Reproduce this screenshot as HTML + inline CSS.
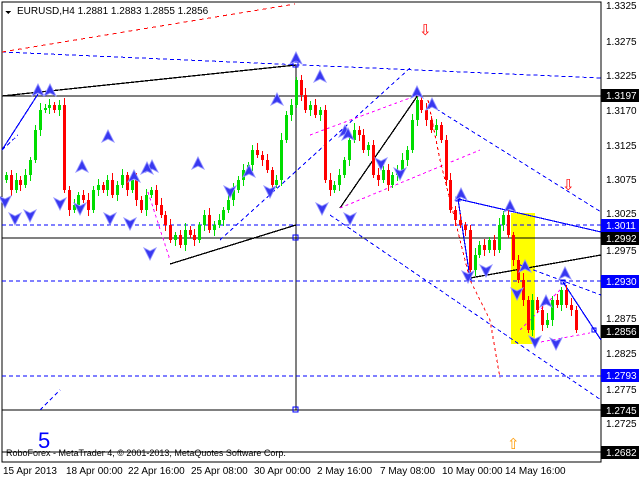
<!DOCTYPE html>
<html><head><meta charset="utf-8"><style>
body{margin:0;background:#fff;width:640px;height:480px;overflow:hidden;font-family:"Liberation Sans",sans-serif}
svg text{font-family:"Liberation Sans",sans-serif;font-size:10px}
</style></head><body>
<svg id="s" width="640" height="480" xmlns="http://www.w3.org/2000/svg" shape-rendering="crispEdges">
<rect width="640" height="480" fill="#fff"/>
<rect x="2" y="2" width="599" height="460" fill="none" stroke="#000"/>
<rect x="511" y="213" width="24" height="131" fill="#ffff00"/>
<g stroke="#000" stroke-width="1.3">
<line x1="2" y1="96" x2="601" y2="96"/>
<line x1="2" y1="238" x2="601" y2="238"/>
<line x1="2" y1="410" x2="601" y2="410"/>
<line x1="2" y1="452" x2="601" y2="452"/>
<line x1="2" y1="96" x2="296" y2="65"/>
<line x1="170" y1="264" x2="296" y2="225"/>
<line x1="340" y1="208" x2="418" y2="95"/>
<line x1="470" y1="278" x2="601" y2="255"/>
</g>
<line x1="296" y1="65" x2="296" y2="410" stroke="#000"/>
<g stroke="#0000ff" stroke-dasharray="4,3">
<line x1="2" y1="225" x2="601" y2="225"/>
<line x1="2" y1="281" x2="601" y2="281"/>
<line x1="2" y1="376" x2="601" y2="376"/>
<line x1="2" y1="52" x2="601" y2="78"/>
<line x1="2" y1="150" x2="18" y2="135"/>
<line x1="220" y1="240" x2="410" y2="68"/>
<line x1="430" y1="105" x2="601" y2="212"/>
<line x1="330" y1="215" x2="601" y2="400"/>
<line x1="520" y1="265" x2="601" y2="295"/>
<line x1="40" y1="410" x2="60" y2="390"/>
</g>
<line x1="2" y1="52" x2="295" y2="4" stroke="#ff0000" stroke-dasharray="4,4"/>
<g stroke="#0000ff" stroke-width="1.2" fill="none">
<line x1="2" y1="150" x2="38" y2="94"/>
<line x1="458" y1="199" x2="601" y2="232"/>
<line x1="458" y1="199" x2="470" y2="278"/>
<line x1="563" y1="282" x2="601" y2="340"/>
<rect x="293" y="62" width="5" height="5"/><rect x="293" y="235" width="5" height="5"/><rect x="293" y="407" width="5" height="5"/>
<rect x="456" y="197" width="4" height="4"/><rect x="467" y="276" width="4" height="4"/><rect x="561" y="280" width="4" height="4"/><rect x="592" y="328" width="4" height="4"/>
</g>
<g stroke="#ff00ff" stroke-dasharray="3,3" fill="none">
<polyline points="148,192 170,260"/>
<polyline points="310,135 418,95"/>
<polyline points="340,208 480,150"/>
<polyline points="535,343 590,333"/>
<polyline points="520,330 560,290"/>
</g>
<polyline points="428,100 440,160 470,280 490,320 500,378" fill="none" stroke="#ff0000" stroke-dasharray="3,3"/>
<g id="c"></g>
<g id="m" fill="#3838f0" stroke="#9090ff" stroke-width="0.8"></g>
<text x="419" y="35" fill="#ff0000" style="font-size:15px">⇩</text>
<text x="562" y="190" fill="#ff0000" style="font-size:15px">⇩</text>
<text x="507" y="449" fill="#ff9900" style="font-size:15px">⇧</text>
<text x="38" y="448" fill="#0000ff" style="font-size:22px">5</text>
<text x="6" y="456" fill="#000" style="font-size:9px">RoboForex - MetaTrader 4, © 2001-2013, MetaQuotes Software Corp.</text>
<path d="M5 11 L11 11 L8 14Z" fill="#000"/>
<text x="17" y="14" fill="#000">EURUSD,H4  1.2881 1.2883 1.2855 1.2856</text>
<g fill="#000">
<text x="606" y="9">1.3325</text><text x="606" y="45">1.3275</text><text x="606" y="79">1.3225</text>
<text x="606" y="114">1.3170</text><text x="606" y="149">1.3125</text><text x="606" y="183">1.3075</text>
<text x="606" y="217">1.3025</text><text x="606" y="254">1.2975</text><text x="606" y="322">1.2875</text>
<text x="606" y="357">1.2825</text><text x="606" y="393">1.2775</text><text x="606" y="427">1.2725</text>
</g>
<rect x="601" y="89" width="38" height="13" fill="#000"/><text x="606" y="99" fill="#fff">1.3197</text>
<rect x="601" y="219" width="38" height="13" fill="#0000ff"/><text x="606" y="229" fill="#fff">1.3011</text>
<rect x="601" y="232" width="38" height="13" fill="#000"/><text x="606" y="242" fill="#fff">1.2992</text>
<rect x="601" y="275" width="38" height="13" fill="#0000ff"/><text x="606" y="285" fill="#fff">1.2930</text>
<rect x="601" y="325" width="38" height="13" fill="#000"/><text x="606" y="335" fill="#fff">1.2856</text>
<rect x="601" y="369" width="38" height="13" fill="#0000ff"/><text x="606" y="379" fill="#fff">1.2793</text>
<rect x="601" y="404" width="38" height="13" fill="#000"/><text x="606" y="414" fill="#fff">1.2745</text>
<rect x="601" y="446" width="38" height="13" fill="#000"/><text x="606" y="456" fill="#fff">1.2682</text>
<g fill="#000">
<text x="3" y="474">15 Apr 2013</text><text x="66" y="474">18 Apr 00:00</text><text x="128" y="474">22 Apr 16:00</text>
<text x="191" y="474">25 Apr 08:00</text><text x="254" y="474">30 Apr 00:00</text><text x="317" y="474">2 May 16:00</text>
<text x="380" y="474">7 May 08:00</text><text x="442" y="474">10 May 00:00</text><text x="505" y="474">14 May 16:00</text>
</g>
</svg>
<script>
var cl=[175,190,180,185,175,160,130,110,108,105,110,105,190,210,205,195,200,210,190,185,190,180,195,185,175,190,180,200,210,195,190,205,215,225,240,235,245,230,235,240,225,215,230,225,220,210,200,190,180,170,165,150,155,160,170,185,180,140,115,105,80,95,110,105,115,110,180,190,185,175,160,140,130,135,150,145,175,180,170,185,175,170,160,150,120,100,110,120,130,125,140,180,210,220,225,230,270,255,245,250,240,250,225,215,235,260,280,300,330,300,310,325,320,300,305,290,305,310,330];
var c=document.getElementById('c'),h='',p=180;
for(var i=0;i<cl.length;i++){var x=Math.round(5+i*4.83),o=p,k=cl[i],t=Math.min(o,k)-3-(i*7%5),b=Math.max(o,k)+3+(i*3%6);
var col=k<o?'#00dd00':'#ff0000';if(Math.abs(k-o)<1)k=o+1;
h+='<line x1="'+(x+1.5)+'" y1="'+t+'" x2="'+(x+1.5)+'" y2="'+b+'" stroke="'+col+'"/><rect x="'+x+'" y="'+Math.min(o,k)+'" width="3" height="'+Math.abs(k-o)+'" fill="'+col+'"/>';p=k;}
c.innerHTML=h;
var up=[[38,84],[50,84],[108,130],[82,160],[152,160],[134,170],[147,162],[198,157],[249,165],[277,93],[296,52],[320,70],[345,125],[348,128],[417,86],[432,98],[461,188],[510,200],[525,260],[546,295],[565,267]];
var dn=[[5,208],[15,225],[30,222],[60,210],[80,215],[110,225],[130,230],[150,260],[230,198],[270,198],[322,215],[350,225],[381,170],[400,180],[468,283],[486,277],[517,300],[535,348],[556,350]];
var m='';up.forEach(function(a){m+='<path d="M'+a[0]+' '+a[1]+' l6 12 l-6 -3 l-6 3z"/>';});
dn.forEach(function(a){m+='<path d="M'+a[0]+' '+a[1]+' l6 -12 l-6 3 l-6 -3z"/>';});
document.getElementById('m').innerHTML=m;
</script>
</body></html>
